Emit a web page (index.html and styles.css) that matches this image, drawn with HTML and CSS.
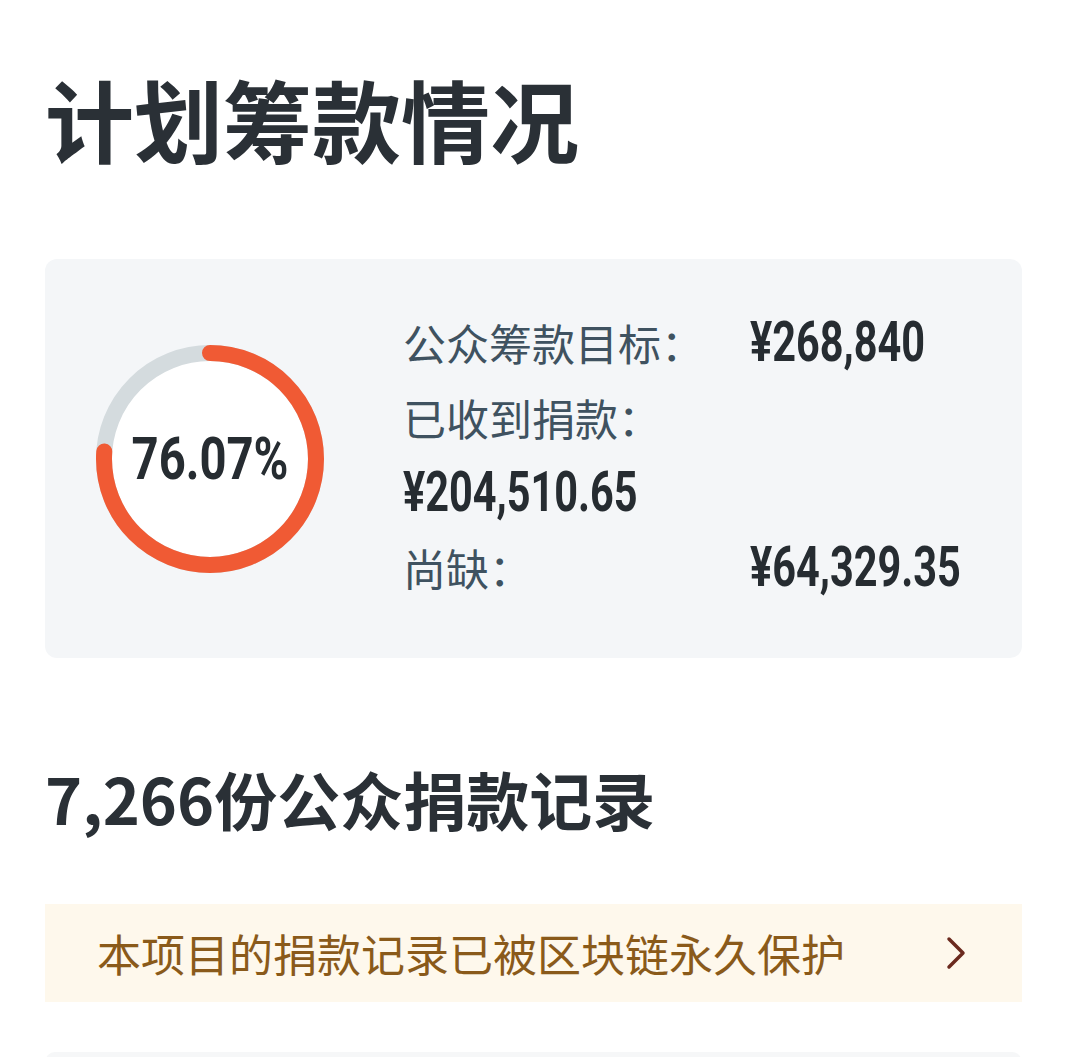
FILE: index.html
```html
<!DOCTYPE html>
<html>
  <head>
    <meta charset="UTF-8">
    <title>计划筹款情况</title>
    <link rel="stylesheet" href="styles.css">
  </head>
  <body>
    <div class="page">
      <h1 class="title">计划筹款情况</h1>

      <div class="summary">
        <div class="ring">
          <svg width="228" height="228" viewBox="0 0 228 228">
            <circle cx="114" cy="114" r="106" fill="#fff" stroke="#d4dbde" stroke-width="16"/>
            <circle cx="114" cy="114" r="106" fill="none" stroke="#f05a34" stroke-width="16"
                    stroke-linecap="round" stroke-dasharray="506.6 666"
                    transform="rotate(-90 114 114)"/>
          </svg>
          <span class="ring-text"><span class="num">76.07%</span></span>
        </div>

        <div class="info">
          <div class="row">
            <span class="label">公众筹款目标：</span>
            <span class="num value">¥268,840</span>
          </div>
          <div class="row">
            <span class="label">已收到捐款：</span>
          </div>
          <div class="row">
            <span class="num">¥204,510.65</span>
          </div>
          <div class="row">
            <span class="label">尚缺：</span>
            <span class="num value">¥64,329.35</span>
          </div>
        </div>
      </div>

      <h2 class="subtitle">7,266份公众捐款记录</h2>

      <div class="notice">
        <span>本项目的捐款记录已被区块链永久保护</span>
        <svg width="22" height="34" viewBox="0 0 22 34">
          <path d="M4 3 L18 17 L4 31" fill="none" stroke="#6b2a1e" stroke-width="3.5" stroke-linecap="round" stroke-linejoin="round"/>
        </svg>
      </div>

      <div class="next-card"></div>
    </div>
  </body>
</html>
```

FILE: styles.css
```css
body {
  margin: 0;
  background-color: #fff;
  font-family: "Noto Sans CJK SC", "Noto Sans", sans-serif;
  color: #2a3036;
}

.page {
  padding: 0 44px 0 45px;
}

.title {
  margin: 65px 0 0 0;
  font-size: 89px;
  line-height: 106px;
  font-weight: 700;
  color: #2a3036;
}

.summary {
  margin-top: 88px;
  height: 399px;
  background-color: #f4f6f8;
  border-radius: 12px;
  display: flex;
  align-items: center;
}

.ring {
  position: relative;
  width: 228px;
  height: 228px;
  margin-left: 51px;
  flex-shrink: 0;
}

.ring svg {
  display: block;
}

.ring-text {
  position: absolute;
  top: 0;
  left: 0;
  width: 228px;
  height: 228px;
  display: flex;
  align-items: center;
  justify-content: center;
}

.num {
  display: inline-block;
  font-family: Roboto, "Liberation Sans", sans-serif;
  font-weight: 700;
  font-size: 56px;
  color: #262c31;
  transform: scaleX(0.74);
  transform-origin: left center;
  white-space: nowrap;
}

.ring-text .num {
  font-size: 59px;
  transform: scaleX(0.8);
  transform-origin: center center;
}

.info {
  margin-left: 79px;
  display: flex;
  flex-direction: column;
  margin-top: -8px;
}

.row {
  height: 75px;
  display: flex;
  align-items: center;
}

.label {
  width: 347px;
  font-size: 43px;
  color: #3f5260;
}

.subtitle {
  margin: 104px 0 0 0;
  font-size: 63px;
  line-height: 72px;
  font-weight: 700;
  color: #2a3036;
}

.notice {
  margin-top: 70px;
  height: 98px;
  background-color: #fef8ec;
  display: flex;
  align-items: center;
  justify-content: space-between;
  padding: 0 55px 0 52px;
  font-size: 44px;
  color: #8a5a1a;
}

.next-card {
  margin-top: 50px;
  height: 40px;
  background-color: #f6f7f8;
  border-radius: 10px 10px 0 0;
}
```
